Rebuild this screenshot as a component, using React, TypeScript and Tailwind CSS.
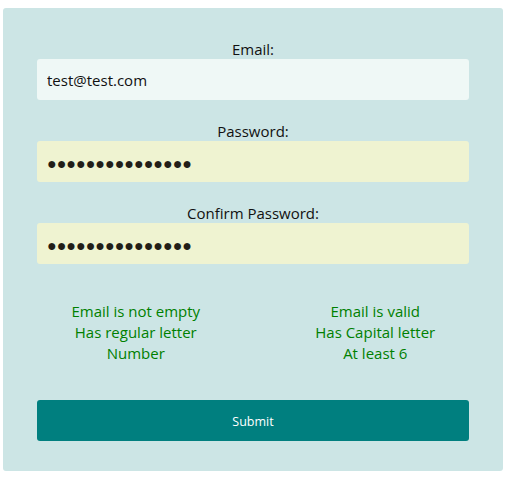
import React from "react";

export default function App() {
  const font = { fontFamily: '"Open Sans", "Noto Sans", sans-serif' };
  const dots = { fontFamily: '"Liberation Sans", Arial, sans-serif' };
  const mask = "●●●●●●●●●●●●●●●";
  return (
    <div className="pt-[8px] pl-[3px] bg-white min-h-[482px]" style={font}>
      <div className="w-[500px] bg-[#cce5e5] rounded-[3px] px-[34px] pt-[31px] pb-[30px] text-[15px] text-[#111]">
        <div className="text-center leading-[20px]">Email:</div>
        <input
          readOnly
          value="test@test.com"
          className="block w-full h-[41px] rounded-[3px] bg-[#eff8f6] px-[10px] text-[15px] text-[#111] outline-none"
          style={font}
        />
        <div className="text-center leading-[20px] mt-[21px]">Password:</div>
        <input
          readOnly
          value={mask}
          aria-label="Password"
          className="block w-full h-[41px] rounded-[3px] bg-[#eff3d1] px-[10px] pt-[4px] text-[16px] text-[#221e18] outline-none"
          style={dots}
        />
        <div className="text-center leading-[20px] mt-[21px]">Confirm Password:</div>
        <input
          readOnly
          value={mask}
          aria-label="Confirm Password"
          className="block w-full h-[41px] rounded-[3px] bg-[#eff3d1] px-[10px] pt-[4px] text-[16px] text-[#221e18] outline-none"
          style={dots}
        />
        <div className="grid grid-cols-2 ml-[-21px] mr-[-26px] mt-[37px] text-center text-[#008000] leading-[21px]">
          <div>
            <div>Email is not empty</div>
            <div>Has regular letter</div>
            <div>Number</div>
          </div>
          <div>
            <div>Email is valid</div>
            <div>Has Capital letter</div>
            <div>At least 6</div>
          </div>
        </div>
        <button
          className="block w-full h-[41px] mt-[36px] rounded-[3px] bg-[#007f7f] pt-[3px] text-white text-[12.5px]"
          style={font}
        >
          Submit
        </button>
      </div>
    </div>
  );
}
